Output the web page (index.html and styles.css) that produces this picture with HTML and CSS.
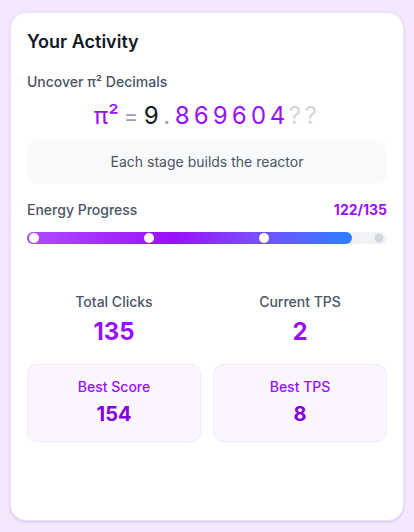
FILE: index.html
```html
<!DOCTYPE html>
<html lang="en">
<head>
<meta charset="utf-8">
<title>Your Activity</title>
<link rel="stylesheet" href="styles.css">
</head>
<body>
  <div class="card">
    <h2 class="title">Your Activity</h2>

    <div class="label">Uncover π² Decimals</div>
    <div class="pi-row">
      <span class="pi-sym">π²</span>
      <span class="pi-eq">=</span>
      <span class="digits"><span class="d-int">9</span><span class="d-dot">.</span><span class="d-known">869604</span><span class="d-unknown">??</span></span>
    </div>

    <div class="hint">Each stage builds the reactor</div>

    <div class="progress-head">
      <span class="label">Energy Progress</span>
      <span class="progress-count">122/135</span>
    </div>
    <div class="bar">
      <div class="bar-fill" style="width: 90.37%"></div>
      <div class="bar-dots">
        <span class="dot on" style="left: 0%"></span>
        <span class="dot on" style="left: 33.333%"></span>
        <span class="dot on" style="left: 66.667%"></span>
        <span class="dot off" style="left: 100%"></span>
      </div>
    </div>

    <div class="stats">
      <div class="stat">
        <div class="stat-label">Total Clicks</div>
        <div class="stat-value">135</div>
      </div>
      <div class="stat">
        <div class="stat-label">Current TPS</div>
        <div class="stat-value">2</div>
      </div>
      <div class="best">
        <div class="best-label">Best Score</div>
        <div class="best-value">154</div>
      </div>
      <div class="best">
        <div class="best-label">Best TPS</div>
        <div class="best-value">8</div>
      </div>
    </div>
  </div>
</body>
</html>
```

FILE: styles.css
```css
* { box-sizing: border-box; }

html, body {
  margin: 0;
  padding: 0;
}

body {
  background: #f3e8ff;
  padding: 12px 10px 11px;
  font-family: Inter, "Noto Sans", "DejaVu Sans", sans-serif;
  color: #101828;
}

.card {
  height: 509px;
  background: #ffffff;
  border: 1px solid #ece2fa;
  border-radius: 16px;
  box-shadow: 0 1px 3px rgba(60, 30, 100, 0.12), 0 1px 2px rgba(60, 30, 100, 0.06);
  padding: 15px 16px 16px;
  display: flex;
  flex-direction: column;
}

.title {
  margin: 0;
  font-size: 18px;
  line-height: 28px;
  font-weight: 600;
  color: #101828;
}

.label {
  font-size: 14px;
  line-height: 20px;
  font-weight: 500;
  color: #4a5565;
}

.title + .label {
  margin-top: 16px;
}

.pi-row {
  display: flex;
  justify-content: center;
  align-items: baseline;
  gap: 5px;
  margin-top: 8px;
  line-height: 32px;
}

.pi-sym {
  font-size: 24px;
  color: #9810fa;
  font-weight: 400;
}

.pi-eq {
  font-size: 22px;
  color: #99a1af;
  font-weight: 400;
}

.digits {
  font-size: 24px;
  font-weight: 400;
  font-variant-numeric: tabular-nums;
  letter-spacing: 3.5px;
}

.d-int { color: #101828; }
.d-dot { color: #99a1af; padding: 0 1px; }
.d-known { color: #9810fa; }
.d-unknown { color: #d1d5dc; }

.hint {
  margin-top: 8px;
  background: #f9fafb;
  border-radius: 10px;
  padding: 12px;
  text-align: center;
  font-size: 14px;
  line-height: 20px;
  color: #4a5565;
}

.progress-head {
  margin-top: 16px;
  display: flex;
  justify-content: space-between;
  align-items: baseline;
}

.progress-count {
  font-size: 14px;
  line-height: 20px;
  font-weight: 700;
  color: #9810fa;
}

.bar {
  position: relative;
  margin-top: 12px;
  height: 12px;
  border-radius: 6px;
  background: linear-gradient(90deg, #e5e7eb, #f3f4f6);
}

.bar-fill {
  height: 100%;
  border-radius: 6px;
  background: linear-gradient(90deg, #b04cff 0%, #9810fa 45%, #7b4dfb 70%, #2b7fff 100%);
}

.bar-dots {
  position: absolute;
  top: 0;
  bottom: 0;
  left: 7px;
  right: 8px;
}

.dot {
  position: absolute;
  top: 50%;
  width: 10px;
  height: 10px;
  border-radius: 50%;
  transform: translate(-50%, -50%);
}

.dot.on { background: #ffffff; }
.dot.off { background: #d1d5dc; width: 9px; height: 9px; }

.stats {
  margin-top: 48px;
  display: grid;
  grid-template-columns: 1fr 1fr;
  column-gap: 12px;
  row-gap: 16px;
}

.stat {
  text-align: center;
}

.stat-label {
  font-size: 14px;
  line-height: 20px;
  font-weight: 500;
  color: #4a5565;
}

.stat-value {
  margin-top: 4px;
  font-size: 24px;
  line-height: 32px;
  font-weight: 700;
  color: #9810fa;
}

.best {
  background: #faf5ff;
  border: 1px solid #f3e8ff;
  border-radius: 10px;
  padding: 12px 12px 13px;
  text-align: center;
}

.best-label {
  font-size: 14px;
  line-height: 20px;
  font-weight: 500;
  color: #9810fa;
}

.best-value {
  margin-top: 3px;
  font-size: 20px;
  line-height: 28px;
  font-weight: 700;
  color: #8200db;
}
```
